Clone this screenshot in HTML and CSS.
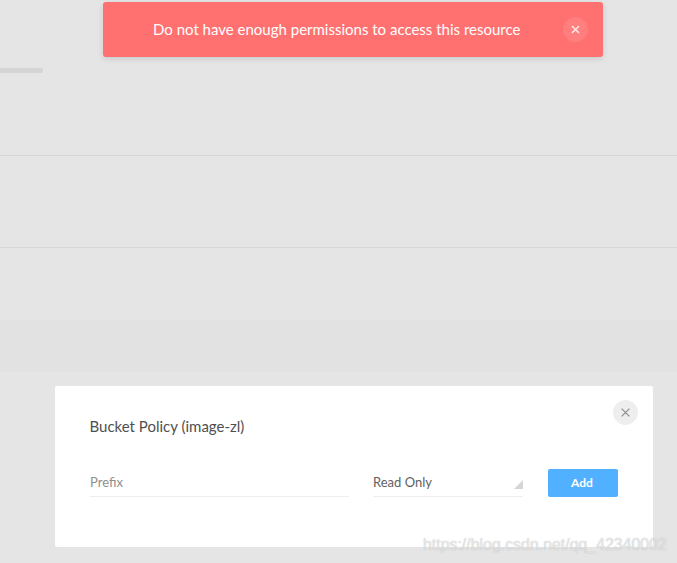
FILE: index.html
```html
<!DOCTYPE html>
<html lang="en">
<head>
    <meta charset="UTF-8">
    <title>Bucket Policy</title>
    <link rel="stylesheet" href="styles.css">
</head>
<body>

    <div class="page">
        <div class="row row-top"><div class="progress"></div></div>
        <div class="row row-mid"></div>
        <div class="row row-gap"></div>
        <div class="band"></div>
    </div>

    <div class="alert">
        <span class="alert-text">Do not have enough permissions to access this resource</span>
        <button class="alert-close">
            <svg width="9" height="9" viewBox="0 0 9 9"><path d="M1 1l7 7M8 1L1 8"/></svg>
        </button>
    </div>

    <div class="modal">
        <button class="modal-close">
            <svg width="9" height="9" viewBox="0 0 9 9"><path d="M.6.6l7.8 7.8M8.4.6L.6 8.4"/></svg>
        </button>
        <h4 class="modal-title">Bucket Policy (image-zl)</h4>
        <div class="policy-form">
            <div class="field field-prefix">
                <input class="prefix-input" placeholder="Prefix">
            </div>
            <div class="field field-select">
                <span class="select-value">Read Only</span>
                <i class="select-arrow"></i>
            </div>
            <button class="add-btn">Add</button>
        </div>
    </div>

    <div class="watermark">https://blog.csdn.net/qq_42340002</div>

</body>
</html>
```

FILE: styles.css
```css
html, body {
    height: 100%;
}
body {
    font-family: 'Lato', sans-serif;
    background-color: #e5e5e5;
    margin: 0;
    overflow: hidden;
}
button {
    font-family: inherit;
    border: none;
    padding: 0;
    cursor: pointer;
}
.page {
    display: flex;
    flex-direction: column;
}
.row {
    border-bottom: 1px solid #d6d6d6;
}
.row-top {
    height: 156px;
    padding-top: 68px;
    box-sizing: border-box;
}
.row-mid {
    height: 91px;
}
.row-gap {
    height: 72px;
    border-bottom: none;
}
.band {
    height: 52px;
    background-color: #e2e2e2;
}
.progress {
    width: 43px;
    height: 5px;
    background-color: #d5d5d5;
    border-radius: 0 2px 2px 0;
}
.alert {
    position: absolute;
    top: 2px;
    left: 103px;
    width: 500px;
    height: 55px;
    display: flex;
    align-items: center;
    box-sizing: border-box;
    padding: 0 15px 0 50px;
    background-color: #ff7070;
    border-radius: 3px;
    box-shadow: 0 2px 6px rgba(0,0,0,0.12);
}
.alert-text {
    flex: 1;
    color: #fff;
    font-size: 15px;
    line-height: 55px;
}
.alert-close {
    width: 25px;
    height: 25px;
    border-radius: 50%;
    background-color: rgba(255,255,255,0.1);
    display: flex;
    align-items: center;
    justify-content: center;
}
.alert-close path {
    stroke: #fff;
    stroke-width: 1.6;
    fill: none;
    opacity: 0.8;
}
.modal {
    position: absolute;
    top: 386px;
    left: 55px;
    width: 598px;
    height: 161px;
    box-sizing: border-box;
    padding: 31px 35px 0;
    background-color: #fff;
    border-radius: 2px;
}
.modal-close {
    position: absolute;
    top: 14px;
    right: 15px;
    width: 25px;
    height: 25px;
    border-radius: 50%;
    background-color: #eee;
    display: flex;
    align-items: center;
    justify-content: center;
}
.modal-close path {
    stroke: #888;
    stroke-width: 1.1;
    fill: none;
}
.modal-title {
    margin: 0 0 0 -0.5px;
    font-size: 15px;
    font-weight: 400;
    line-height: 19px;
    color: #4f4f4f;
}
.policy-form {
    display: flex;
    align-items: flex-end;
    margin-top: 30px;
}
.field {
    height: 30px;
    border-bottom: 1px solid #eee;
    box-sizing: content-box;
}
.field-prefix {
    width: 259px;
    margin-right: 24px;
}
.prefix-input {
    width: 100%;
    height: 100%;
    border: none;
    outline: none;
    padding: 2px 0 0;
    box-sizing: border-box;
    font-family: inherit;
    font-size: 13px;
    color: #555;
}
.prefix-input::placeholder {
    color: #8e8e8e;
    opacity: 1;
}
.field-select {
    position: relative;
    width: 150px;
    margin-right: 25px;
    font-size: 13px;
    line-height: 32px;
    color: #5f5f5f;
}
.select-arrow {
    position: absolute;
    right: 0;
    bottom: 7px;
    width: 0;
    height: 0;
    border-style: solid;
    border-width: 0 0 9px 9px;
    border-color: transparent transparent #d6d6d6 transparent;
}
.add-btn {
    width: 70px;
    height: 28px;
    padding: 0 2px 2px 0;
    background-color: #51b0ff;
    color: #fff;
    font-size: 12px;
    font-weight: 700;
    border-radius: 2px;
}
.watermark {
    position: absolute;
    top: 535px;
    left: 423px;
    font-family: 'Liberation Sans', sans-serif;
    font-size: 15.9px;
    line-height: 20px;
    color: rgba(255,255,255,0.6);
    text-shadow: 0 0 1px rgba(120,120,120,0.55);
    white-space: nowrap;
}
```
